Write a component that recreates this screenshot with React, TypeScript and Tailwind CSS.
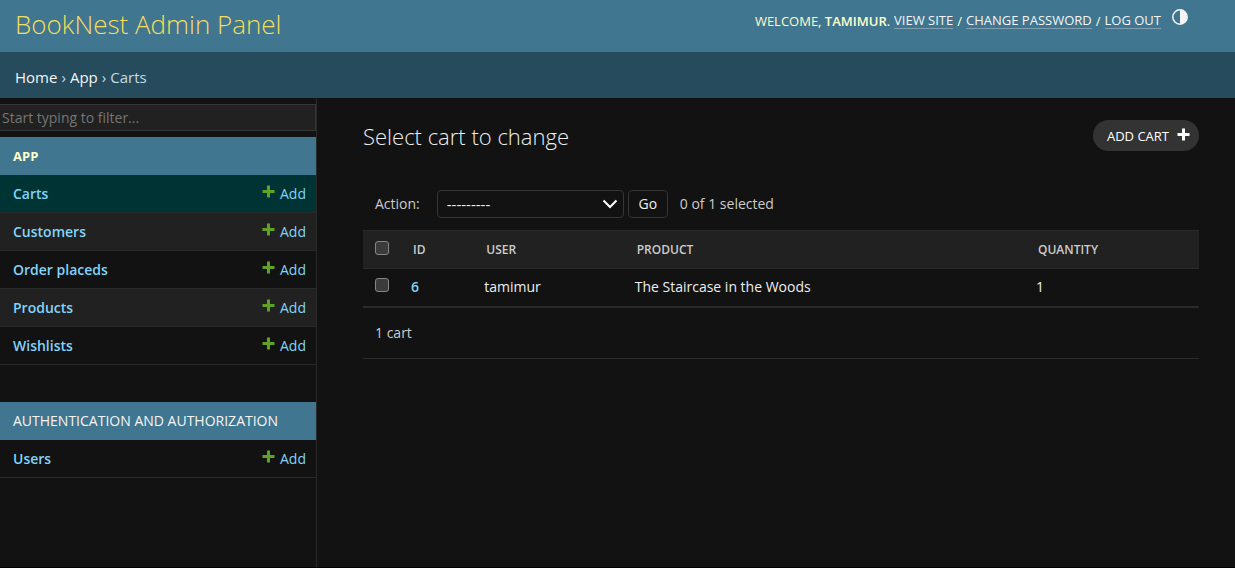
import React, { useState } from 'react';

type Model = { name: string; active?: boolean };

const appModels: Model[] = [
  { name: 'Carts', active: true },
  { name: 'Customers' },
  { name: 'Order placeds' },
  { name: 'Products' },
  { name: 'Wishlists' },
];

const authModels: Model[] = [{ name: 'Users' }];

function PlusIcon({ className }: { className: string }) {
  return (
    <svg className={className} width="13" height="13" viewBox="0 0 13 13" fill="currentColor" aria-hidden="true">
      <path d="M5 .5h3V5h4.5v3H8v4.500H5V8H.5V5H5z" />
    </svg>
  );
}

function ThemeIcon() {
  return (
    <svg width="16" height="16" viewBox="0 0 16 16" aria-hidden="true">
      <circle cx="8" cy="8" r="7.200" fill="none" stroke="currentColor" strokeWidth="1.500" />
      <path d="M8 1a7 7 0 0 1 0 14z" fill="currentColor" />
    </svg>
  );
}

function ModelGroup({ title, models, current }: { title: string; models: Model[]; current?: boolean }) {
  return (
    <section className="mb-[37px]">
      <h2 className={'flex h-[38px] items-center bg-[#417690] px-[13px] uppercase ' + (current ? 'text-[13px]' : 'text-[14px]')}>
        <a href="#section" className={current ? 'font-bold text-[#ffffcc]' : 'text-[#f5f5f5]'}>
          {title}
        </a>
      </h2>
      <ul>
        {models.map((m) => (
          <li
            key={m.name}
            className={
              'flex h-[38px] items-center justify-between border-b border-[#2a2a2a] pr-[10px] pl-[13px] text-[#81d4fa] ' +
              (m.active ? 'bg-[#003333]' : 'even:bg-[#212121]')
            }
          >
            <a href="#model" className="font-semibold">
              {m.name}
            </a>
            <a href="#add" className="flex items-center gap-[5px]">
              <PlusIcon className="mb-1 text-[#5fa225]" />
              Add
            </a>
          </li>
        ))}
      </ul>
    </section>
  );
}

const checkbox =
  'block size-[14px] appearance-none rounded-[3px] border border-[#858585] bg-[#3b3b3b] checked:bg-[#81d4fa]';
const toolLink = 'border-b border-[#7d9fb1] text-[#f5f5f5]';

export default function App() {
  const [selected, setSelected] = useState(false);
  const toggle = () => setSelected(!selected);

  return (
    <div className="flex min-h-screen flex-col border-b border-black bg-[#121212] font-['Open_Sans','Noto_Sans',sans-serif] text-[14px] leading-5 text-[#eeeeee]">
      <header className="flex h-[52px] justify-between bg-[#417690] pr-[47px] pl-[15px] text-[#ffffcc]">
        <h1 className="pt-2 text-[26px] leading-8 font-light text-[#f5dd5d]">
          <a href="#index">BookNest Admin Panel</a>
        </h1>
        <div className="flex items-start gap-[11px] pt-[9px]">
          <div className="flex items-center gap-1 pt-1 text-[13px] leading-[15px] uppercase">
            <span>
              Welcome, <strong className="font-semibold">tamimur</strong>.
            </span>
            <a href="#site" className={toolLink}>View site</a>
            <span>/</span>
            <a href="#password" className={toolLink}>Change password</a>
            <span>/</span>
            <button type="button" className={toolLink + ' uppercase'}>Log out</button>
          </div>
          <button type="button" aria-label="Toggle theme" className="text-[#f5f5f5]">
            <ThemeIcon />
          </button>
        </div>
      </header>

      <nav aria-label="Breadcrumbs" className="flex h-[46px] items-center gap-1 bg-[#264b5d] px-[15px] pt-1 text-[15px] text-[#c4dce8]">
        <a href="#home" className="text-[#f5f5f5]">Home</a>
        <span>›</span>
        <a href="#app" className="text-[#f5f5f5]">App</a>
        <span>›</span>
        <span>Carts</span>
      </nav>

      <div className="flex flex-1">
        <aside className="w-[317px] shrink-0 border-r border-[#2a2a2a] pt-[6px]">
          <input
            type="search"
            aria-label="Filter navigation items"
            placeholder="Start typing to filter..."
            className="mb-[6px] block h-[27px] w-full border border-l-0 border-[#353535] bg-[#212121] px-[2px] placeholder:text-[#757575]"
          />
          <ModelGroup title="App" models={appModels} current />
          <ModelGroup title="Authentication and Authorization" models={authModels} />
        </aside>

        <main className="min-w-0 flex-1 pt-[22px] pr-9 pl-[46px]">
          <div className="flex items-start justify-between">
            <h2 className="text-[22px] leading-8 font-light">Select cart to change</h2>
            <a
              href="#add-cart"
              className="flex h-[31px] items-center gap-2 rounded-full bg-[#333333] pr-[9px] pl-[14px] text-[13px] text-white uppercase"
            >
              Add cart
              <PlusIcon className="mb-[2px]" />
            </a>
          </div>

          <form onSubmit={(e) => e.preventDefault()} className="pt-[38px]">
            <div className="flex h-7 items-center pl-3 text-[#cccccc]">
              <label htmlFor="action" className="mr-[17px]">Action:</label>
              <div className="relative mr-1">
                <select
                  id="action"
                  className="h-7 w-[187px] appearance-none rounded border border-[#353535] bg-[#121212] px-[9px] text-[15px] text-[#eeeeee]"
                >
                  <option>---------</option>
                  <option>Delete selected carts</option>
                </select>
                <svg
                  className="pointer-events-none absolute top-[9px] right-[6px] text-white"
                  width="16"
                  height="10"
                  viewBox="0 0 16 10"
                  fill="none"
                  stroke="currentColor"
                  strokeWidth="2"
                  aria-hidden="true"
                >
                  <path d="M1.500 1.500 8 8l6.500-6.500" />
                </svg>
              </div>
              <button type="submit" className="mr-3 h-7 w-10 rounded border border-[#353535] text-[#eeeeee]">
                Go
              </button>
              <span>{selected ? 1 : 0} of 1 selected</span>
            </div>

            <table className="mt-3 w-full table-fixed border-collapse text-left">
              <colgroup>
                <col className="w-[38px]" />
                <col className="w-[9%]" />
                <col className="w-[18%]" />
                <col className="w-[48%]" />
                <col />
              </colgroup>
              <thead className="bg-[#212121] text-[12px] text-[#cccccc] uppercase">
                <tr className="h-[38px] border-y border-[#2a2a2a]">
                  <th className="pb-1 pl-3">
                    <input type="checkbox" aria-label="Select all carts" className={checkbox} checked={selected} onChange={toggle} />
                  </th>
                  <th className="pl-3 font-semibold">ID</th>
                  <th className="pl-[10px] font-semibold">User</th>
                  <th className="pl-[10px] font-semibold">Product</th>
                  <th className="pl-[10px] font-semibold">Quantity</th>
                </tr>
              </thead>
              <tbody>
                <tr className="h-[38px] border-b-2 border-[#2a2a2a]">
                  <td className="pb-1 pl-3">
                    <input type="checkbox" aria-label="Select cart 6" className={checkbox} checked={selected} onChange={toggle} />
                  </td>
                  <th className="pl-[10px] font-semibold text-[#81d4fa]">
                    <a href="#cart-6">6</a>
                  </th>
                  <td className="pl-2">tamimur</td>
                  <td className="pl-2">The Staircase in the Woods</td>
                  <td className="pl-2">1</td>
                </tr>
              </tbody>
            </table>

            <p className="flex h-[51px] items-center border-b border-[#2a2a2a] pl-3 text-[#cccccc]">1 cart</p>
          </form>
        </main>
      </div>
    </div>
  );
}
